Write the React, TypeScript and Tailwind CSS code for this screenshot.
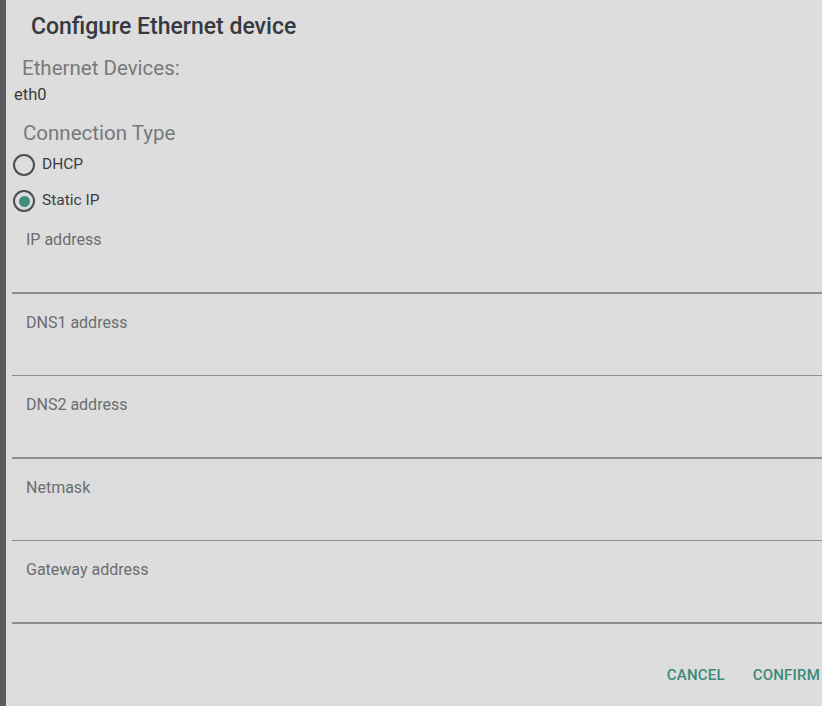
const fields = ["IP address", "DNS1 address", "DNS2 address", "Netmask", "Gateway address"];

function Radio({ checked, label }: { checked: boolean; label: string }) {
  return (
    <div className="flex items-center h-[36px]">
      <div className="w-[22px] h-[22px] ml-[13px] rounded-full border-2 border-[#4a4d52] flex items-center justify-center">
        {checked && <div className="w-[11px] h-[11px] rounded-full bg-[#3f8f7f]" />}
      </div>
      <span className="ml-[7px] text-[15.5px] text-[#3b3e44]">{label}</span>
    </div>
  );
}

function Field({ label }: { label: string }) {
  return (
    <div className="h-[82.5px] flex flex-col">
      <div className="pl-[20px] pt-[8px] text-[16px] text-[#6b6d70] leading-[20px]">{label}</div>
      <div className="mt-auto h-[1.5px] bg-[#8c8e90] ml-[6px] mb-[11px]" />
    </div>
  );
}

export default function App() {
  return (
    <div className="w-[822px] h-[706px] flex bg-[#dcdddc] overflow-hidden" style={{ fontFamily: "Roboto, 'Noto Sans', sans-serif" }}>
      <div className="w-[6px] h-full bg-[#5a5c60]" />
      <div className="flex-1 flex flex-col">
        <div className="pl-[25px] pt-[13px] text-[23px] font-medium text-[#363940] leading-[28px]">
          Configure Ethernet device
        </div>
        <div className="pl-[16px] pt-[14px] text-[20.5px] text-[#77797c] leading-[26px]">Ethernet Devices:</div>
        <div className="pl-[8px] pt-[3px] text-[16.5px] text-[#3a3c40] leading-[22px]">eth0</div>
        <div className="pl-[17px] pt-[14px] text-[20.5px] text-[#77797c] leading-[26px]">Connection Type</div>
        <div className="pt-[1px] -ml-[6px]">
          <Radio checked={false} label="DHCP" />
          <Radio checked={true} label="Static IP" />
        </div>
        <div className="flex flex-col pt-[3px]">
          {fields.map((f) => (
            <Field key={f} label={f} />
          ))}
        </div>
        <div className="flex justify-end items-center gap-[28px] pr-[2px] pt-[29px] text-[15px] font-medium text-[#3d8a7a] tracking-[0.2px]">
          <span>CANCEL</span>
          <span>CONFIRM</span>
        </div>
      </div>
    </div>
  );
}
